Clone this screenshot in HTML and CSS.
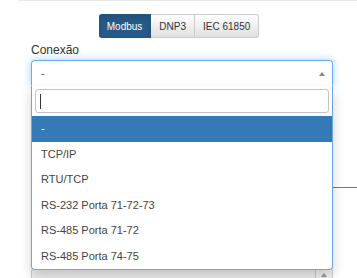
FILE: index.html
```html
<!DOCTYPE html>
<html lang="pt">
<head>
    <meta charset="UTF-8">
    <meta name="viewport" content="width=device-width, initial-scale=1.0">
    <title>Conexão</title>
    <link rel="stylesheet" href="styles.css">
</head>
<body>
    <div class="topline"></div>
    <div class="tabs">
        <button class="tab active">Modbus</button>
        <button class="tab">DNP3</button>
        <button class="tab">IEC 61850</button>
    </div>
    <div class="form">
        <label class="label">Conexão</label>
        <div class="field">
            <div class="select">
                <span>-</span>
                <span class="arrow"></span>
            </div>
            <div class="dropdown">
                <div class="search">
                    <div class="search-input"><span class="caret"></span></div>
                </div>
                <ul class="options">
                    <li class="selected">-</li>
                    <li>TCP/IP</li>
                    <li>RTU/TCP</li>
                    <li>RS-232 Porta 71-72-73</li>
                    <li>RS-485 Porta 71-72</li>
                    <li>RS-485 Porta 74-75</li>
                </ul>
            </div>
        </div>
        <div class="section"></div>
        <div class="number">
            <span class="spin"><span class="up"></span></span>
        </div>
    </div>
</body>
</html>
```

FILE: styles.css
```css
body {
    margin: 0;
    font-family: "Liberation Sans", Arial, sans-serif;
    background-color: #fff;
    color: #333;
}
.topline {
    margin-left: 19px;
    border-top: 1px solid #e8e8e8;
}
.tabs {
    display: flex;
    justify-content: center;
    margin-top: 13px;
    padding-left: 1px;
}
.tab {
    height: 24px;
    padding: 0 8px;
    margin: 0;
    font-family: "Liberation Sans", Arial, sans-serif;
    font-size: 10px;
    color: #333;
    border: 1px solid #ccc;
    border-left: none;
    background-image: linear-gradient(to bottom, #fff 0, #e0e0e0 100%);
}
.tab:last-child {
    border-radius: 0 3px 3px 0;
}
.tab.active {
    color: #fff;
    background: #265a88;
    border-color: #245580;
    border-radius: 3px 0 0 3px;
    box-shadow: inset 0 3px 5px rgba(0, 0, 0, 0.125);
}
.form {
    padding: 0 24px 0 31px;
}
.label {
    display: block;
    font-size: 12px;
    line-height: 15px;
    margin: 5px 0 2px;
    color: #333;
}
.field {
    position: relative;
    z-index: 2;
}
.select {
    position: relative;
    height: 24px;
    line-height: 24px;
    padding: 0 9px;
    font-size: 11px;
    color: #444;
    border: 1px solid #66afe9;
    border-bottom-color: #fff;
    border-radius: 4px 4px 0 0;
    background: #fff;
    box-shadow: 0 0 8px rgba(102, 175, 233, 0.6);
}
.arrow {
    position: absolute;
    right: 7px;
    top: 11px;
    border-left: 3.5px solid transparent;
    border-right: 3.5px solid transparent;
    border-bottom: 4px solid #888;
}
.dropdown {
    position: absolute;
    top: 26px;
    left: 0;
    right: 0;
    background: #fff;
    border: 1px solid #6ea6db;
    border-top: none;
    border-radius: 0 0 4px 4px;
    box-shadow: 0 6px 12px rgba(0, 0, 0, 0.175);
}
.search {
    padding: 3px;
}
.search-input {
    height: 22px;
    border: 1px solid #c4c4c4;
    border-radius: 3px;
    display: flex;
    align-items: center;
    padding-left: 4px;
}
.caret {
    width: 1px;
    height: 15px;
    background: #333;
}
.options {
    list-style: none;
    margin: 0;
    padding: 0;
}
.options li {
    padding: 5px 9px;
    font-size: 11px;
    line-height: 15.5px;
    color: #444;
}
.options li.selected {
    background-color: #337ab7;
    color: #fff;
}
.section {
    height: 101px;
    margin-right: -24px;
    border-bottom: 1px solid #4a7fb5;
}
.number {
    position: relative;
    height: 26px;
    margin-top: 79px;
    background: #eee;
    border: 1px solid #ccc;
    border-radius: 4px;
}
.spin {
    position: absolute;
    right: 0;
    top: 0;
    bottom: 0;
    width: 16px;
    border-left: 1px solid #ccc;
    background: #f2f2f2;
}
.up {
    position: absolute;
    left: 5px;
    top: 5px;
    border-left: 3px solid transparent;
    border-right: 3px solid transparent;
    border-bottom: 4px solid #999;
}
```
